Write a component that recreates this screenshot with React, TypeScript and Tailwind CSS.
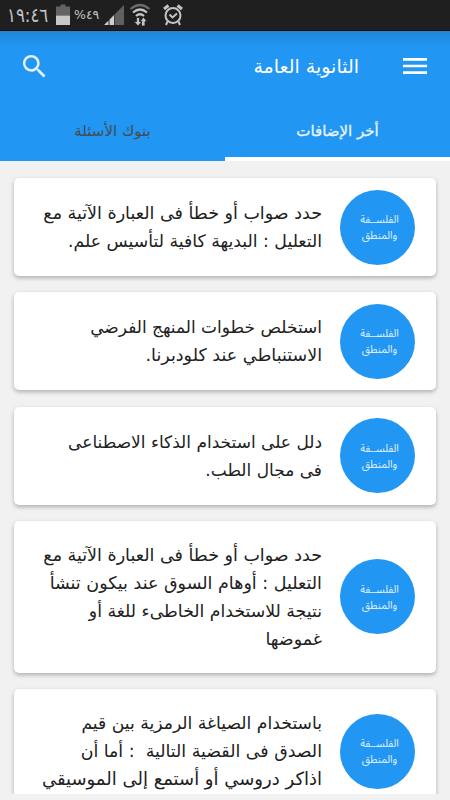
import { MdMenu, MdSearch } from "react-icons/md";

interface Line {
  text: string;
  size: string;
}

interface Question {
  id: number;
  lines: Line[];
}

const questions: Question[] = [
  {
    id: 1,
    lines: [
      { text: "حدد صواب أو خطأ فى العبارة الآتية مع", size: "text-[17.5px]" },
      { text: "التعليل : البديهة كافية لتأسيس علم.", size: "text-[17.3px]" },
    ],
  },
  {
    id: 2,
    lines: [
      { text: "استخلص خطوات المنهج الفرضي", size: "text-[17px]" },
      { text: "الاستنباطي عند كلودبرنا.", size: "text-[17.5px]" },
    ],
  },
  {
    id: 3,
    lines: [
      { text: "دلل على استخدام الذكاء الاصطناعى", size: "text-[17px]" },
      { text: "فى مجال الطب.", size: "text-[17px]" },
    ],
  },
  {
    id: 4,
    lines: [
      { text: "حدد صواب أو خطأ فى العبارة الآتية مع", size: "text-[17.5px]" },
      { text: "التعليل : أوهام السوق عند بيكون تنشأ", size: "text-[17.5px]" },
      { text: "نتيجة للاستخدام الخاطىء للغة أو", size: "text-[17.3px]" },
      { text: "غموضها", size: "text-[17.5px]" },
    ],
  },
  {
    id: 5,
    lines: [
      { text: "باستخدام الصياغة الرمزية بين قيم", size: "text-[17.2px]" },
      { text: "الصدق فى القضية التالية  : أما أن", size: "text-[17.4px]" },
      { text: "اذاكر دروسي أو أستمع إلى الموسيقي", size: "text-[18px]" },
    ],
  },
];

function StatusBar() {
  return (
    <div
      dir="ltr"
      className="flex h-[31px] shrink-0 items-center border-b border-[#2a0d08] bg-[#1f1f1f] pl-[7px] text-[#c4c4c4]"
    >
      <span className="w-[49px] shrink-0 origin-left scale-x-[0.83] whitespace-nowrap text-[20px] leading-[28px]">
        ١٩:٤٦
      </span>
      <svg width="14" height="22" viewBox="0 0 14 22" className="shrink-0">
        <path d="M4.5 0.5h5v2H14v9H0v-9h4.5z" fill="#636363" />
        <path d="M0 11.5h14V21H0z" fill="#c8c8c8" />
      </svg>
      <span className="ml-[4px] w-[30px] whitespace-nowrap text-[12.5px] leading-[30px]">%٤٩</span>
      <svg width="20" height="20" viewBox="0 0 20 20" className="shrink-0">
        <path d="M20 0v20H10.5V9.5z" fill="#606060" />
        <path d="M0 20l4.5-4.5V20zM5.5 14.5L10 10v10H5.500z" fill="#cfcfcf" />
      </svg>
      <svg width="22" height="24" viewBox="0 0 22 24" fill="none" className="ml-[5px] shrink-0">
        <path d="M1.5 6Q11-2 20.5 6" stroke="#6a6a6a" strokeWidth="2.2" />
        <path d="M4 9.5Q11 3.5 18 9.5M7 13Q11 9.5 15 13" stroke="#c4c4c4" strokeWidth="2.2" />
        <path
          d="M7.5 14.5h3v4H13L9 23l-4-4.500h2.5zM12.500 23v-4.500H11l3.500-4.500 3.500 4.500h-2V23z"
          fill="#c4c4c4"
          stroke="#1f1f1f"
          strokeWidth="0.8"
        />
      </svg>
      <svg
        width="20"
        height="22"
        viewBox="0 0 20 22"
        fill="none"
        stroke="#c4c4c4"
        strokeWidth="2"
        className="ml-[12px] shrink-0"
      >
        <circle cx="10" cy="11.5" r="7.5" />
        <path d="M6.5 10.5l3 3L14 9.500M4.500 17.500L3 21M15.500 17.500L17 21" />
        <path d="M1 5l4.500-3.500M19 5l-4.500-3.500" strokeWidth="3" />
      </svg>
    </div>
  );
}

function Header() {
  return (
    <header className="shrink-0 bg-linear-to-b from-[#2085d8] to-[#2196f3] to-[16px]">
      <div className="flex h-[70px] items-center px-[19px] text-white">
        <button className="flex">
          <MdMenu size={32} />
        </button>
        <h1 className="mr-[40px] text-[19px] leading-[30px]">الثانوية العامة</h1>
        <button className="mr-auto flex text-[#e3f2fd]">
          <MdSearch size={31} />
        </button>
      </div>
      <nav className="grid h-[60px] grid-cols-2 text-[15px]">
        <button className="border-b-[4px] border-white pt-[5px] text-[#eaf5fe] [-webkit-text-stroke:0.3px]">
          أخر الإضافات
        </button>
        <button className="pt-px text-[#464c4e]">بنوك الأسئلة</button>
      </nav>
    </header>
  );
}

function SubjectBadge() {
  return (
    <div className="-my-4 flex size-[75px] shrink-0 flex-col items-center justify-center rounded-full bg-[#2196f3] pt-[2px] pl-[4px] font-['Noto_Sans_Arabic'] text-[10.5px] leading-[16px] text-[#e3f2fd]">
      <span>الفلســفة</span>
      <span>والمنطق</span>
    </div>
  );
}

function QuestionCard({ question }: { question: Question }) {
  return (
    <article className="flex min-h-[98px] shrink-0 items-center gap-[18px] rounded-[5px] bg-white py-[20px] pr-[21px] shadow-[0_2px_4px_rgba(0,0,0,0.28)]">
      <SubjectBadge />
      <div className="text-[#212121]">
        {question.lines.map((line) => (
          <p key={line.text} className={`h-[28px] leading-[28px] whitespace-pre ${line.size}`}>
            {line.text}
          </p>
        ))}
      </div>
    </article>
  );
}

export default function App() {
  return (
    <div
      dir="rtl"
      className="flex h-[800px] w-[450px] flex-col overflow-hidden bg-[#f1f1f1] font-['DejaVu_Sans',sans-serif]"
    >
      <StatusBar />
      <Header />
      <main className="flex h-[633px] flex-col gap-[16.3px] overflow-hidden px-[14px] pt-[17px]">
        {questions.map((q) => (
          <QuestionCard key={q.id} question={q} />
        ))}
      </main>
    </div>
  );
}
